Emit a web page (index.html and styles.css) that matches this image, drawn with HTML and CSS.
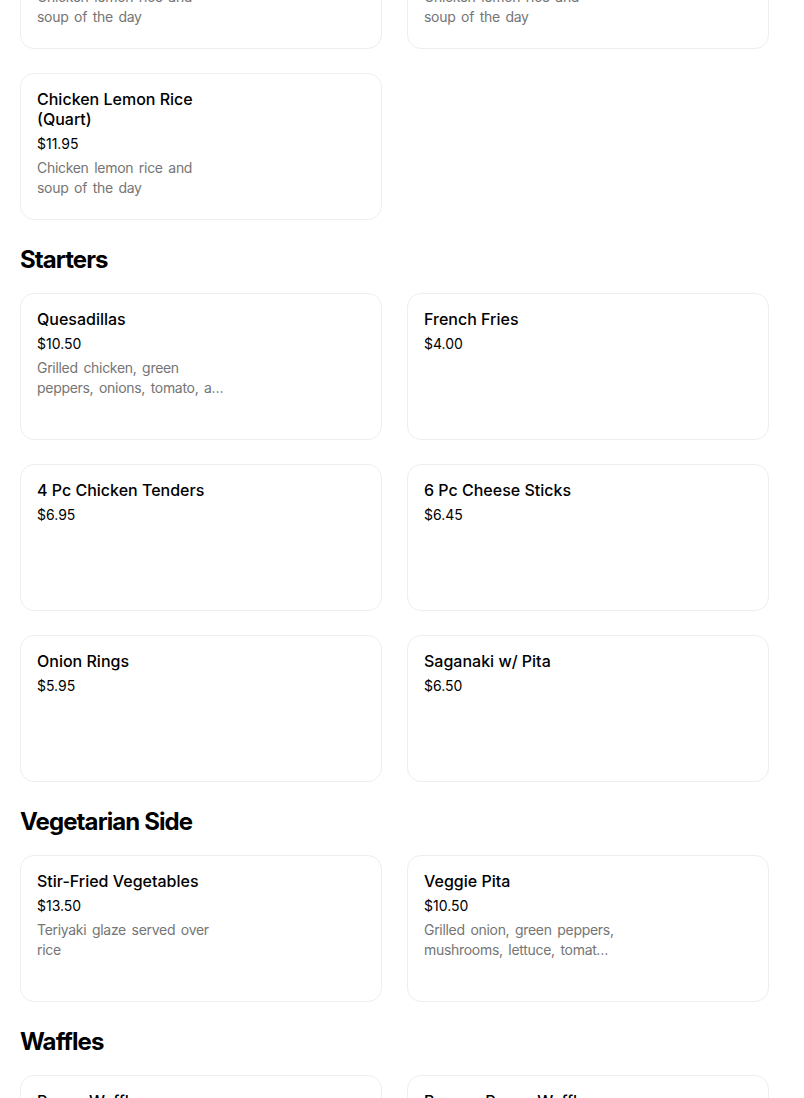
FILE: index.html
```html
<!DOCTYPE html>
<html lang="en">
<head>
<meta charset="utf-8">
<title>Menu</title>
<link rel="stylesheet" href="styles.css">
</head>
<body>
<main class="menu">
  <section class="section section-first">
    <div class="grid">
      <div class="card">
        <div class="info">
          <div class="title">Chicken Lemon Rice (Pint)</div>
          <div class="price">$6.95</div>
          <div class="desc">Chicken lemon rice and soup of the day</div>
        </div>
      </div>
      <div class="card">
        <div class="info">
          <div class="title">Chicken Lemon Rice (Cup)</div>
          <div class="price">$4.95</div>
          <div class="desc">Chicken lemon rice and soup of the day</div>
        </div>
      </div>
      <div class="card">
        <div class="info">
          <div class="title">Chicken Lemon Rice (Quart)</div>
          <div class="price">$11.95</div>
          <div class="desc">Chicken lemon rice and soup of the day</div>
        </div>
      </div>
    </div>
  </section>

  <section class="section">
    <h2 class="heading">Starters</h2>
    <div class="grid">
      <div class="card">
        <div class="info">
          <div class="title">Quesadillas</div>
          <div class="price">$10.50</div>
          <div class="desc">Grilled chicken, green peppers, onions, tomato, and cheese served with sour cream and salsa</div>
        </div>
      </div>
      <div class="card">
        <div class="info">
          <div class="title">French Fries</div>
          <div class="price">$4.00</div>
        </div>
      </div>
      <div class="card">
        <div class="info">
          <div class="title">4 Pc Chicken Tenders</div>
          <div class="price">$6.95</div>
        </div>
      </div>
      <div class="card">
        <div class="info">
          <div class="title">6 Pc Cheese Sticks</div>
          <div class="price">$6.45</div>
        </div>
      </div>
      <div class="card">
        <div class="info">
          <div class="title">Onion Rings</div>
          <div class="price">$5.95</div>
        </div>
      </div>
      <div class="card">
        <div class="info">
          <div class="title">Saganaki w/ Pita</div>
          <div class="price">$6.50</div>
        </div>
      </div>
    </div>
  </section>

  <section class="section">
    <h2 class="heading">Vegetarian Side</h2>
    <div class="grid">
      <div class="card">
        <div class="info">
          <div class="title">Stir-Fried Vegetables</div>
          <div class="price">$13.50</div>
          <div class="desc">Teriyaki glaze served over rice</div>
        </div>
      </div>
      <div class="card">
        <div class="info">
          <div class="title">Veggie Pita</div>
          <div class="price">$10.50</div>
          <div class="desc">Grilled onion, green peppers, mushrooms, lettuce, tomato, and feta cheese</div>
        </div>
      </div>
    </div>
  </section>

  <section class="section">
    <h2 class="heading">Waffles</h2>
    <div class="grid">
      <div class="card">
        <div class="info">
          <div class="title">Pecan Waffle</div>
          <div class="price">$7.95</div>
        </div>
      </div>
      <div class="card">
        <div class="info">
          <div class="title">Banana Pecan Waffle</div>
          <div class="price">$8.95</div>
        </div>
      </div>
    </div>
  </section>
</main>
</body>
</html>
```

FILE: styles.css
```css
html, body {
  margin: 0;
  padding: 0;
  background: #ffffff;
}

body {
  font-family: Inter, "Noto Sans", "Liberation Sans", sans-serif;
  color: #000000;
  overflow: hidden;
}

.menu {
  margin-top: -98px;
  padding: 0 35px 0 20px;
}

.section {
  padding-top: 24px;
}

.section-first {
  padding-top: 0;
}

.heading {
  margin: 0 0 17px 0;
  font-size: 24px;
  line-height: 32px;
  font-weight: 700;
  letter-spacing: -0.9px;
  color: #000000;
}

.grid {
  display: grid;
  grid-template-columns: 362px 362px;
  column-gap: 25px;
  row-gap: 24px;
}

.card {
  box-sizing: border-box;
  height: 147px;
  border: 1px solid #eeeeee;
  border-radius: 14px;
  padding: 15px 16px 16px;
  background: #ffffff;
}

.info {
  width: 191px;
  display: flex;
  flex-direction: column;
}

.title {
  font-size: 16px;
  line-height: 20px;
  font-weight: 500;
  color: #000000;
}

.price {
  margin-top: 5px;
  font-size: 14px;
  line-height: 20px;
  font-weight: 400;
  color: #000000;
}

.desc {
  margin-top: 4px;
  font-size: 14px;
  line-height: 20px;
  letter-spacing: -0.3px;
  word-spacing: 2px;
  color: #757575;
  display: -webkit-box;
  -webkit-line-clamp: 2;
  -webkit-box-orient: vertical;
  overflow: hidden;
}
```
